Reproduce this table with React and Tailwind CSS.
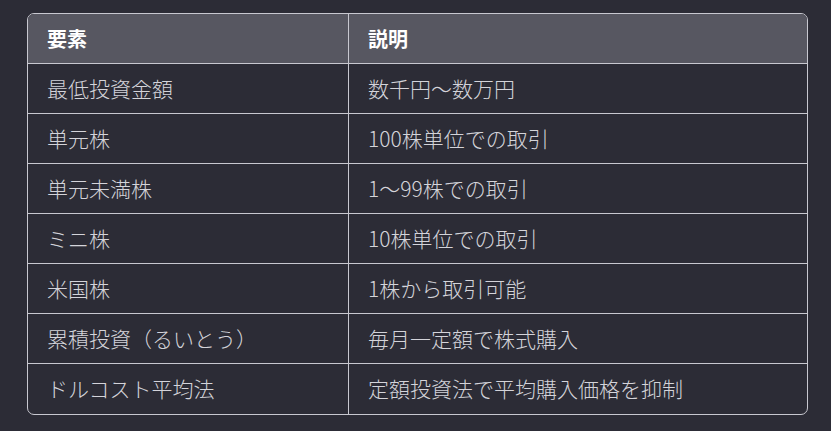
const rows = [
  ["最低投資金額", "数千円〜数万円"],
  ["単元株", "100株単位での取引"],
  ["単元未満株", "1〜99株での取引"],
  ["ミニ株", "10株単位での取引"],
  ["米国株", "1株から取引可能"],
  ["累積投資（るいとう）", "毎月一定額で株式購入"],
  ["ドルコスト平均法", "定額投資法で平均購入価格を抑制"],
];

export default function App() {
  return (
    <div
      className="min-h-[431px] w-full bg-[#2c2c36] pt-[13px] pl-[27px]"
      style={{ fontFamily: '"Noto Sans CJK JP", "Noto Sans", sans-serif' }}
    >
      <div className="w-[781px] overflow-hidden rounded-[7px] border border-[#c8c8d0]">
        <div className="grid h-[50px] grid-cols-[321px_1fr] border-b border-[#c8c8d0] bg-[#575761] text-[20px] font-bold text-white">
          <div className="flex items-center border-r border-[#c8c8d0] px-[19px]">要素</div>
          <div className="flex items-center px-[19px]">説明</div>
        </div>
        {rows.map(([a, b], i) => (
          <div
            key={a}
            className={
              "grid h-[50px] grid-cols-[321px_1fr] text-[21px] font-light text-[#d4d4da] " +
              (i < rows.length - 1 ? "border-b border-[#c8c8d0]" : "")
            }
          >
            <div className="flex items-center border-r border-[#c8c8d0] px-[19px]">{a}</div>
            <div className="flex items-center px-[19px]">{b}</div>
          </div>
        ))}
      </div>
    </div>
  );
}
